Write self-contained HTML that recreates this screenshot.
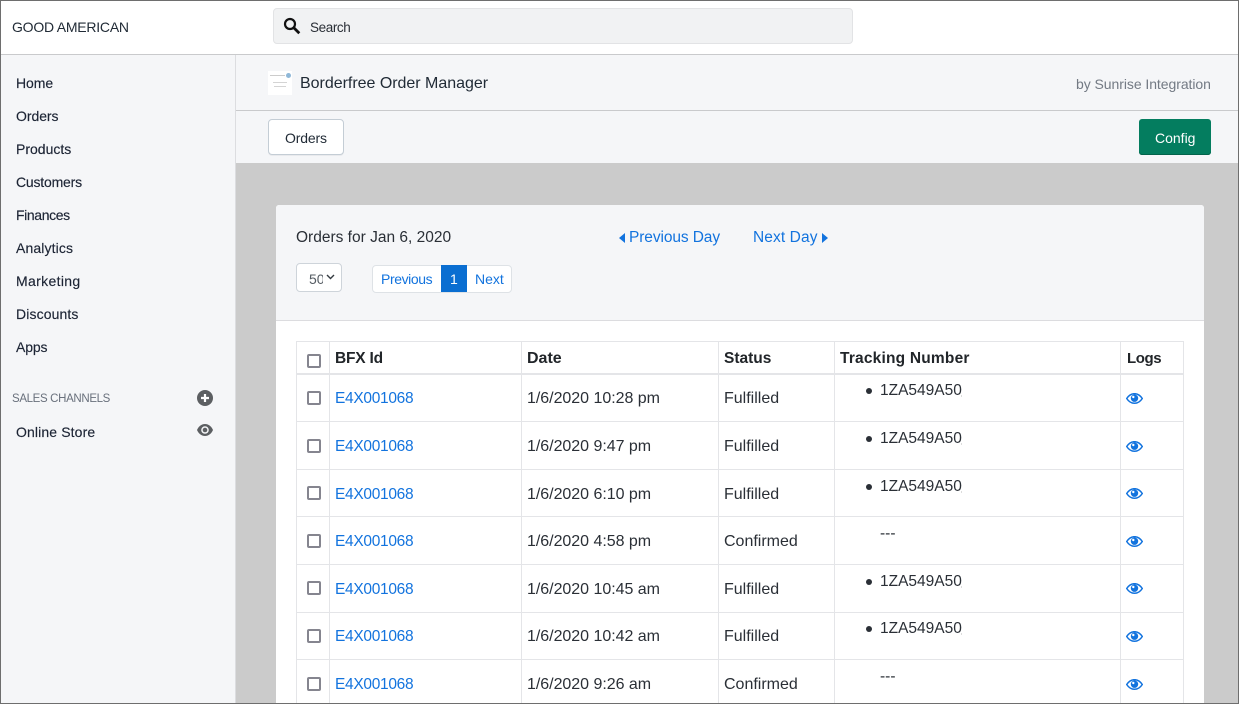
<!DOCTYPE html>
<html><head><meta charset="utf-8"><title>Borderfree Order Manager</title>
<style>
html,body{margin:0;padding:0;width:1239px;height:704px;overflow:hidden;background:#fff}
body{position:relative;font-family:"Liberation Sans",Arial,sans-serif;font-size:15px;color:#212b36}
div,span,a,svg{position:absolute;white-space:nowrap}
.t{line-height:20px}
.nav{left:16px;font-size:14px;letter-spacing:.12px;color:#1c2434;line-height:20px;-webkit-text-stroke:.15px #1c2434}
.l{background:#e4e5e8}
.id{left:335px;color:#1273de;font-size:15.5px;line-height:20px;letter-spacing:-.3px}
.d{left:527px;line-height:20px;font-size:16px;color:#2a2f36;letter-spacing:-.03px}
.s{left:724px;line-height:20px;font-size:16px;color:#2a2f36}
.tr{left:880px;line-height:20px;font-size:15.5px;color:#2a2f36}
.n::after{content:"";position:absolute;left:81px;top:14px;width:1px;height:2px;background:#dcdcdc}
.b{left:866px;width:6px;height:6px;border-radius:50%;background:#2a2f36}
.h{font-weight:bold;line-height:20px;top:349px;font-size:15.5px;color:#212529}
.c{left:307px;width:10px;height:10px;border:2px solid #85858f;border-radius:2px;background:#fff}
.e{left:1126px;width:17px;height:12px}
</style></head><body>

<!-- top bar -->
<div style="left:0;top:0;width:1239px;height:54px;background:#fff;border-bottom:1px solid #c9cacc"></div>
<div class="t" style="left:12px;top:17px;font-size:14px;color:#212b36;letter-spacing:-.23px">GOOD AMERICAN</div>
<div style="left:273px;top:8px;width:578px;height:34px;background:#f1f2f3;border:1px solid #e2e3e5;border-radius:4px"></div>
<svg style="left:283px;top:17px" width="18" height="18" viewBox="0 0 18 18"><circle cx="7" cy="7" r="5" fill="none" stroke="#111" stroke-width="2.200"/><path d="M10.800 10.800L16.300 16.300" stroke="#111" stroke-width="2.800" fill="none"/></svg>
<div class="t" style="left:310px;top:18px;font-size:13.5px;color:#2a2f36;letter-spacing:-.4px">Search</div>

<!-- sidebar -->
<div style="left:0;top:55px;width:235px;height:649px;background:#f5f6f8;border-right:1px solid #dcdde0"></div>
<div class="nav" style="top:73px;letter-spacing:-.05px">Home</div>
<div class="nav" style="top:106px;letter-spacing:-.05px">Orders</div>
<div class="nav" style="top:139px;letter-spacing:0">Products</div>
<div class="nav" style="top:172px;letter-spacing:-.2px">Customers</div>
<div class="nav" style="top:205px;letter-spacing:-.38px">Finances</div>
<div class="nav" style="top:238px">Analytics</div>
<div class="nav" style="top:271px;letter-spacing:.34px">Marketing</div>
<div class="nav" style="top:304px">Discounts</div>
<div class="nav" style="top:337px;letter-spacing:-.15px">Apps</div>
<div class="t" style="left:12px;top:389px;font-size:11.5px;color:#69707c;letter-spacing:-.35px">SALES CHANNELS</div>
<svg style="left:197px;top:390px" width="16" height="16" viewBox="0 0 16 16"><circle cx="8" cy="8" r="8" fill="#5c5f62"/><path d="M8 4v8M4 8h8" stroke="#fff" stroke-width="2.200"/></svg>
<div class="nav" style="top:422px">Online Store</div>
<svg style="left:197px;top:424px" width="16" height="12" viewBox="0 0 16 12"><path d="M8 0C4 0 1.300 3 0 6c1.300 3 4 6 8 6s6.700-3 8-6c-1.300-3-4-6-8-6z" fill="#5c5f62"/><circle cx="8" cy="6" r="3.800" fill="#f5f6f8"/><circle cx="8" cy="6" r="2.300" fill="#5c5f62"/></svg>

<!-- app header -->
<div style="left:236px;top:55px;width:1003px;height:55px;background:#f5f6f8;border-bottom:1px solid #c9cacc"></div>
<div style="left:268px;top:71px;width:24px;height:24px;background:#fff"></div>
<div style="left:270px;top:75px;width:15px;height:1px;background:#ccc"></div>
<div style="left:286px;top:73px;width:5px;height:5px;border-radius:50%;background:#8fb8d8"></div>
<div style="left:273px;top:82px;width:14px;height:1px;background:#d4d4d4"></div>
<div style="left:274px;top:86px;width:12px;height:1px;background:#d4d4d4"></div>
<div class="t" style="left:300px;top:74px;font-size:16px;color:#212b36;letter-spacing:-.02px">Borderfree Order Manager</div>
<div class="t" style="left:1076px;top:74px;font-size:14px;color:#737a84;letter-spacing:-.06px">by Sunrise Integration</div>

<!-- toolbar -->
<div style="left:236px;top:111px;width:1003px;height:52px;background:#f5f6f8"></div>
<div style="left:268px;top:119px;width:74px;height:34px;background:#fff;border:1px solid #c4cdd5;border-radius:4px;box-shadow:0 1px 0 rgba(22,29,37,.05)"></div>
<div class="t" style="left:285px;top:128px;font-size:14px;color:#212b36;letter-spacing:-.15px">Orders</div>
<div style="left:1139px;top:119px;width:72px;height:36px;background:#047d5f;border-radius:3px;box-shadow:inset 0 -1px 0 #03634b"></div>
<div class="t" style="left:1155px;top:128px;font-size:14px;color:#fff">Config</div>

<!-- grey -->
<div style="left:236px;top:163px;width:1003px;height:541px;background:#cbcbcb"></div>

<!-- card -->
<div style="left:276px;top:205px;width:928px;height:499px;background:#fff;border-radius:3px 3px 0 0"></div>
<div style="left:276px;top:205px;width:928px;height:115px;background:#f5f6f8;border-bottom:1px solid #dcdcdf;border-radius:3px 3px 0 0"></div>
<div class="t" style="left:296px;top:228px;font-size:15.5px;color:#2a2f36">Orders for Jan 6, 2020</div>

<svg style="left:619px;top:233px" width="6" height="10" viewBox="0 0 6 10"><path d="M6 0v10L0 5z" fill="#1273de"/></svg>
<div class="t" style="left:629px;top:228px;font-size:15.5px;color:#1273de;letter-spacing:-.1px">Previous Day</div>
<div class="t" style="left:753px;top:228px;font-size:15.5px;color:#1273de;letter-spacing:.1px">Next Day</div>
<svg style="left:822px;top:233px" width="6" height="10" viewBox="0 0 6 10"><path d="M0 0v10l6-5z" fill="#1273de"/></svg>

<div style="left:296px;top:263px;width:44px;height:27px;background:#fff;border:1px solid #ced4da;border-radius:4px"></div>
<div class="t" style="left:309px;top:269px;width:14px;overflow:hidden;font-size:14px;color:#555c63">50</div>
<svg style="left:326px;top:274px" width="9" height="6" viewBox="0 0 9 6"><path d="M1 1l3.500 3.500L8 1" fill="none" stroke="#343a40" stroke-width="1.400"/></svg>

<div style="left:372px;top:265px;width:138px;height:26px;background:#fff;border:1px solid #dee2e6;border-radius:4px"></div>
<div class="t" style="left:381px;top:269px;font-size:14px;color:#1273de;letter-spacing:-.4px">Previous</div>
<div style="left:441px;top:265px;width:26px;height:27px;background:#0a6ed1"></div>
<div class="t" style="left:450px;top:269px;font-size:14px;color:#fff">1</div>
<div class="t" style="left:475px;top:269px;font-size:14px;color:#1273de">Next</div>

<!-- table lines -->
<div class="l" style="left:296px;top:341px;width:888px;height:1px"></div>
<div class="l" style="left:296px;top:373px;width:888px;height:2px"></div>
<div class="l" style="left:296px;top:421px;width:888px;height:1px"></div>
<div class="l" style="left:296px;top:469px;width:888px;height:1px"></div>
<div class="l" style="left:296px;top:516px;width:888px;height:1px"></div>
<div class="l" style="left:296px;top:564px;width:888px;height:1px"></div>
<div class="l" style="left:296px;top:612px;width:888px;height:1px"></div>
<div class="l" style="left:296px;top:659px;width:888px;height:1px"></div>
<div class="l" style="left:296px;top:341px;width:1px;height:362px"></div>
<div class="l" style="left:329px;top:341px;width:1px;height:362px"></div>
<div class="l" style="left:521px;top:341px;width:1px;height:362px"></div>
<div class="l" style="left:718px;top:341px;width:1px;height:362px"></div>
<div class="l" style="left:834px;top:341px;width:1px;height:362px"></div>
<div class="l" style="left:1120px;top:341px;width:1px;height:362px"></div>
<div class="l" style="left:1183px;top:341px;width:1px;height:362px"></div>

<!-- header -->
<div class="c" style="top:354px"></div>
<div class="h" style="left:335px;letter-spacing:-.2px">BFX Id</div>
<div class="h" style="left:527px;font-size:16px">Date</div>
<div class="h" style="left:724px">Status</div>
<div class="h" style="left:840px;letter-spacing:.2px">Tracking Number</div>
<div class="h" style="left:1127px;font-size:15px;letter-spacing:-.4px">Logs</div>

<!-- row 1 -->
<div class="c" style="top:391px"></div>
<a class="id" style="top:389px">E4X001068</a>
<div class="d" style="top:389px">1/6/2020 10:28 pm</div>
<div class="s" style="top:389px">Fulfilled</div>
<div class="b" style="top:388px"></div><div class="tr n" style="top:381px">1ZA549A50</div>
<svg class="e" style="top:393px" viewBox="0 0 17 12"><path d="M.7 5.500C3 2 5.500.7 8.500.7s5.500 1.300 7.800 4.800c-2.300 3.500-4.800 4.800-7.800 4.800S3 9 .7 5.500z" fill="none" stroke="#1273de" stroke-width="1.500"/><circle cx="8.500" cy="5.200" r="3.700" fill="#1273de"/><circle cx="7.300" cy="4" r="1.200" fill="#fff"/></svg>

<!-- row 2 -->
<div class="c" style="top:439px"></div>
<a class="id" style="top:437px">E4X001068</a>
<div class="d" style="top:437px">1/6/2020 9:47 pm</div>
<div class="s" style="top:437px">Fulfilled</div>
<div class="b" style="top:436px"></div><div class="tr n" style="top:429px">1ZA549A50</div>
<svg class="e" style="top:441px" viewBox="0 0 17 12"><path d="M.7 5.500C3 2 5.500.7 8.500.7s5.500 1.300 7.800 4.800c-2.300 3.500-4.800 4.800-7.800 4.800S3 9 .7 5.500z" fill="none" stroke="#1273de" stroke-width="1.500"/><circle cx="8.500" cy="5.200" r="3.700" fill="#1273de"/><circle cx="7.300" cy="4" r="1.200" fill="#fff"/></svg>

<!-- row 3 -->
<div class="c" style="top:486px"></div>
<a class="id" style="top:485px">E4X001068</a>
<div class="d" style="top:485px">1/6/2020 6:10 pm</div>
<div class="s" style="top:485px">Fulfilled</div>
<div class="b" style="top:484px"></div><div class="tr n" style="top:477px">1ZA549A50</div>
<svg class="e" style="top:488px" viewBox="0 0 17 12"><path d="M.7 5.500C3 2 5.500.7 8.500.7s5.500 1.300 7.800 4.800c-2.300 3.500-4.800 4.800-7.800 4.800S3 9 .7 5.500z" fill="none" stroke="#1273de" stroke-width="1.500"/><circle cx="8.500" cy="5.200" r="3.700" fill="#1273de"/><circle cx="7.300" cy="4" r="1.200" fill="#fff"/></svg>

<!-- row 4 -->
<div class="c" style="top:534px"></div>
<a class="id" style="top:532px">E4X001068</a>
<div class="d" style="top:532px">1/6/2020 4:58 pm</div>
<div class="s" style="top:532px">Confirmed</div>
<div class="tr" style="top:524px">---</div>
<svg class="e" style="top:536px" viewBox="0 0 17 12"><path d="M.7 5.500C3 2 5.500.7 8.500.7s5.500 1.300 7.800 4.800c-2.300 3.500-4.800 4.800-7.800 4.800S3 9 .7 5.500z" fill="none" stroke="#1273de" stroke-width="1.500"/><circle cx="8.500" cy="5.200" r="3.700" fill="#1273de"/><circle cx="7.300" cy="4" r="1.200" fill="#fff"/></svg>

<!-- row 5 -->
<div class="c" style="top:581px"></div>
<a class="id" style="top:580px">E4X001068</a>
<div class="d" style="top:580px">1/6/2020 10:45 am</div>
<div class="s" style="top:580px">Fulfilled</div>
<div class="b" style="top:579px"></div><div class="tr n" style="top:572px">1ZA549A50</div>
<svg class="e" style="top:583px" viewBox="0 0 17 12"><path d="M.7 5.500C3 2 5.500.7 8.500.7s5.500 1.300 7.800 4.800c-2.300 3.500-4.800 4.800-7.800 4.800S3 9 .7 5.500z" fill="none" stroke="#1273de" stroke-width="1.500"/><circle cx="8.500" cy="5.200" r="3.700" fill="#1273de"/><circle cx="7.300" cy="4" r="1.200" fill="#fff"/></svg>

<!-- row 6 -->
<div class="c" style="top:629px"></div>
<a class="id" style="top:627px">E4X001068</a>
<div class="d" style="top:627px">1/6/2020 10:42 am</div>
<div class="s" style="top:627px">Fulfilled</div>
<div class="b" style="top:626px"></div><div class="tr n" style="top:619px">1ZA549A50</div>
<svg class="e" style="top:631px" viewBox="0 0 17 12"><path d="M.7 5.500C3 2 5.500.7 8.500.7s5.500 1.300 7.800 4.800c-2.300 3.500-4.800 4.800-7.800 4.800S3 9 .7 5.500z" fill="none" stroke="#1273de" stroke-width="1.500"/><circle cx="8.500" cy="5.200" r="3.700" fill="#1273de"/><circle cx="7.300" cy="4" r="1.200" fill="#fff"/></svg>

<!-- row 7 -->
<div class="c" style="top:677px"></div>
<a class="id" style="top:675px">E4X001068</a>
<div class="d" style="top:675px">1/6/2020 9:26 am</div>
<div class="s" style="top:675px">Confirmed</div>
<div class="tr" style="top:667px">---</div>
<svg class="e" style="top:679px" viewBox="0 0 17 12"><path d="M.7 5.500C3 2 5.500.7 8.500.7s5.500 1.300 7.800 4.800c-2.300 3.500-4.800 4.800-7.800 4.800S3 9 .7 5.500z" fill="none" stroke="#1273de" stroke-width="1.500"/><circle cx="8.500" cy="5.200" r="3.700" fill="#1273de"/><circle cx="7.300" cy="4" r="1.200" fill="#fff"/></svg>

<!-- window frame -->
<div style="left:0;top:0;width:1237px;height:702px;border:1px solid #6e6e6e;z-index:5"></div>
</body></html>
